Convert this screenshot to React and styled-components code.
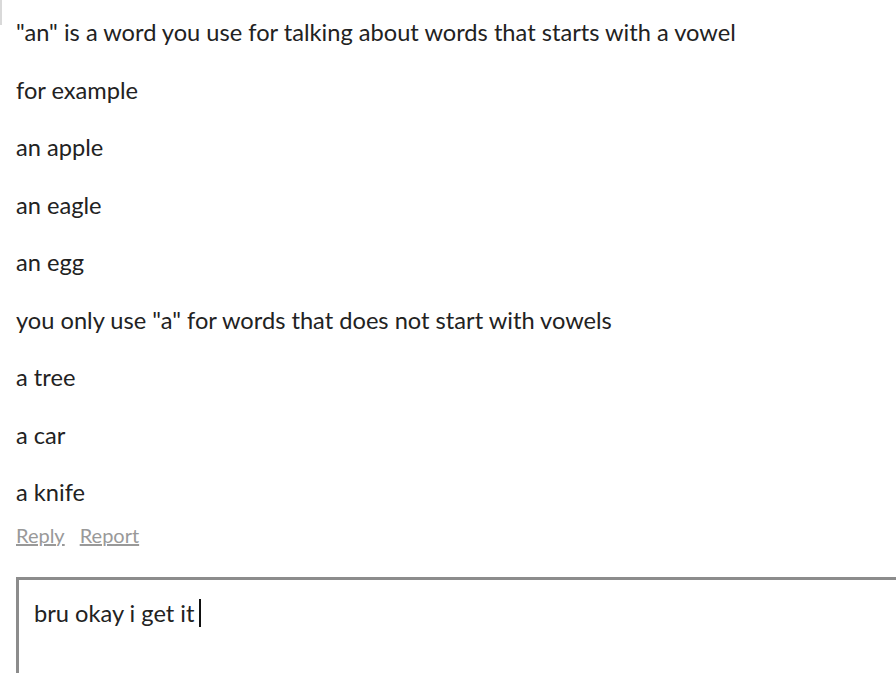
import React from 'react';
import styled, { createGlobalStyle } from 'styled-components';

const GlobalStyle = createGlobalStyle`
  html, body {
    margin: 0;
    padding: 0;
    background: #fff;
    overflow: hidden;
  }
  body {
    font-family: Lato, "Open Sans", sans-serif;
    color: #222;
  }
`;

const Page = styled.div`
  position: relative;
  width: 896px;
  height: 673px;
  overflow: hidden;
  padding: 15px 0 0 16px;
  box-sizing: border-box;
`;

const EdgeMark = styled.div`
  position: absolute;
  left: 0;
  top: 0;
  width: 2px;
  height: 25px;
  background: #d9d9d9;
`;

const Body = styled.div`
  font-size: 23.65px;
`;

const Line = styled.p`
  margin: 0 0 22.5px;
  line-height: 35px;
  white-space: nowrap;
`;

const Actions = styled.div`
  display: flex;
  gap: 15px;
  margin-top: -10px;
  font-size: 20px;
`;

const ActionLink = styled.a`
  color: #999;
  text-decoration: underline;
  cursor: pointer;
`;

const Reply = styled.div`
  margin-top: 30px;
  border: 3px solid #8c8c8c;
  border-right: none;
  height: 120px;
  padding: 16px 0 0 15px;
  box-sizing: border-box;
  font-size: 23.65px;
`;

const Typed = styled.div`
  display: flex;
  align-items: center;
  height: 35px;
`;

const Caret = styled.span`
  display: inline-block;
  width: 2px;
  height: 28px;
  background: #111;
  margin-left: 4px;
`;

const lines = [
  '"an" is a word you use for talking about words that starts with a vowel',
  'for example',
  'an apple',
  'an eagle',
  'an egg',
  'you only use "a" for words that does not start with vowels',
  'a tree',
  'a car',
  'a knife',
];

export default function App() {
  return (
    <Page>
      <GlobalStyle />
      <EdgeMark />
      <Body>
        {lines.map((t) => (
          <Line key={t}>{t}</Line>
        ))}
      </Body>
      <Actions>
        <ActionLink>Reply</ActionLink>
        <ActionLink>Report</ActionLink>
      </Actions>
      <Reply>
        <Typed>
          bru okay i get it<Caret />
        </Typed>
      </Reply>
    </Page>
  );
}
